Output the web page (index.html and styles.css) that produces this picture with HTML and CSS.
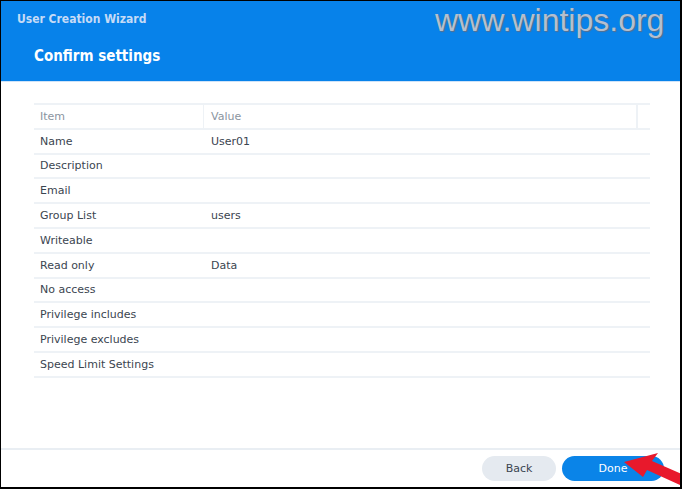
FILE: index.html
```html
<!DOCTYPE html>
<html>
<head>
<meta charset="utf-8">
<link rel="stylesheet" href="styles.css">
</head>
<body>
<div class="frame">
  <header class="head">
    <div class="wizard">User Creation Wizard</div>
    <h1 class="title">Confirm settings</h1>
    <div class="watermark">www.wintips.org</div>
  </header>
  <main class="content">
    <div class="grid">
      <div class="row hdr"><div class="c1">Item</div><div class="c2">Value</div><div class="c3"></div></div>
      <div class="row"><div class="c1">Name</div><div class="c2">User01</div></div>
      <div class="row"><div class="c1">Description</div><div class="c2"></div></div>
      <div class="row"><div class="c1">Email</div><div class="c2"></div></div>
      <div class="row"><div class="c1">Group List</div><div class="c2">users</div></div>
      <div class="row"><div class="c1">Writeable</div><div class="c2"></div></div>
      <div class="row"><div class="c1">Read only</div><div class="c2">Data</div></div>
      <div class="row"><div class="c1">No access</div><div class="c2"></div></div>
      <div class="row"><div class="c1">Privilege includes</div><div class="c2"></div></div>
      <div class="row"><div class="c1">Privilege excludes</div><div class="c2"></div></div>
      <div class="row"><div class="c1">Speed Limit Settings</div><div class="c2"></div></div>
    </div>
  </main>
  <footer class="foot">
    <button class="btn back">Back</button>
    <button class="btn done">Done</button>
  </footer>
  <svg class="arrow" width="62" height="36" viewBox="0 0 62 36">
    <polygon points="4,9 38,0 32,8 62,21 62,33 27,17 23,24" fill="#e8192c"/>
  </svg>
</div>
</body>
</html>
```
FILE: styles.css
```css
* { box-sizing: border-box; }
html, body { margin: 0; padding: 0; background: #fff; }
.frame {
  position: relative;
  width: 682px;
  height: 489px;
  border-left: 1px solid #000;
  border-top: 1px solid #000;
  border-right: 2px solid #000;
  border-bottom: 2px solid #000;
  display: flex;
  flex-direction: column;
  overflow: hidden;
  font-family: "DejaVu Sans", Verdana, sans-serif;
}
.head {
  position: relative;
  height: 81px;
  background: #0782ea;
  border-bottom: 1px solid #cfe3f8;
  flex: none;
}
.wizard {
  position: absolute;
  left: 16px;
  top: 11px;
  font-family: "DejaVu Sans Condensed", "DejaVu Sans", sans-serif;
  font-weight: bold;
  font-size: 12px;
  color: #c5dbf6;
}
.title {
  position: absolute;
  left: 33px;
  top: 46px;
  margin: 0;
  font-family: "DejaVu Sans Condensed", "DejaVu Sans", sans-serif;
  font-weight: bold;
  font-size: 15px;
  color: #fff;
}
.watermark {
  position: absolute;
  left: 434px;
  top: 1px;
  font-family: "Liberation Sans", Arial, sans-serif;
  font-size: 32px;
  color: #b4bfcf;
  text-shadow: 1px 1px 1px #5a6f8c;
}
.content {
  flex: 1;
  padding: 21px 31px 0 33px;
}
.grid {
  width: 616px;
  border-top: 2px solid #eef2f6;
}
.row {
  display: flex;
  height: 24.8px;
  border-bottom: 2px solid #eef2f6;
  font-size: 11px;
  color: #3b4550;
  align-items: center;
}
.row.hdr { color: #8b959f; }
.c1 { width: 170px; padding-left: 6px; height: 100%; display: flex; align-items: center; }
.c2 { flex: 1; padding-left: 7px; height: 100%; display: flex; align-items: center; }
.hdr .c1 { border-right: 1px solid #eef2f6; }
.hdr .c3 { width: 14px; height: 100%; border-left: 2px solid #eef2f6; }
.foot {
  flex: none;
  height: 39px;
  border-top: 2px solid #e9eef3;
  display: flex;
  justify-content: flex-end;
  align-items: flex-start;
  gap: 6px;
  padding: 6px 16px 0 0;
}
.btn {
  height: 25px;
  border: none;
  border-radius: 13px;
  font-family: "DejaVu Sans", Verdana, sans-serif;
  font-size: 11px;
  padding: 0;
}
.back { width: 74px; background: #e5eaf0; color: #3b4550; }
.done { width: 102px; background: #0a84e8; color: #fff; }
.arrow {
  position: absolute;
  right: -2px;
  bottom: -2px;
}
```
